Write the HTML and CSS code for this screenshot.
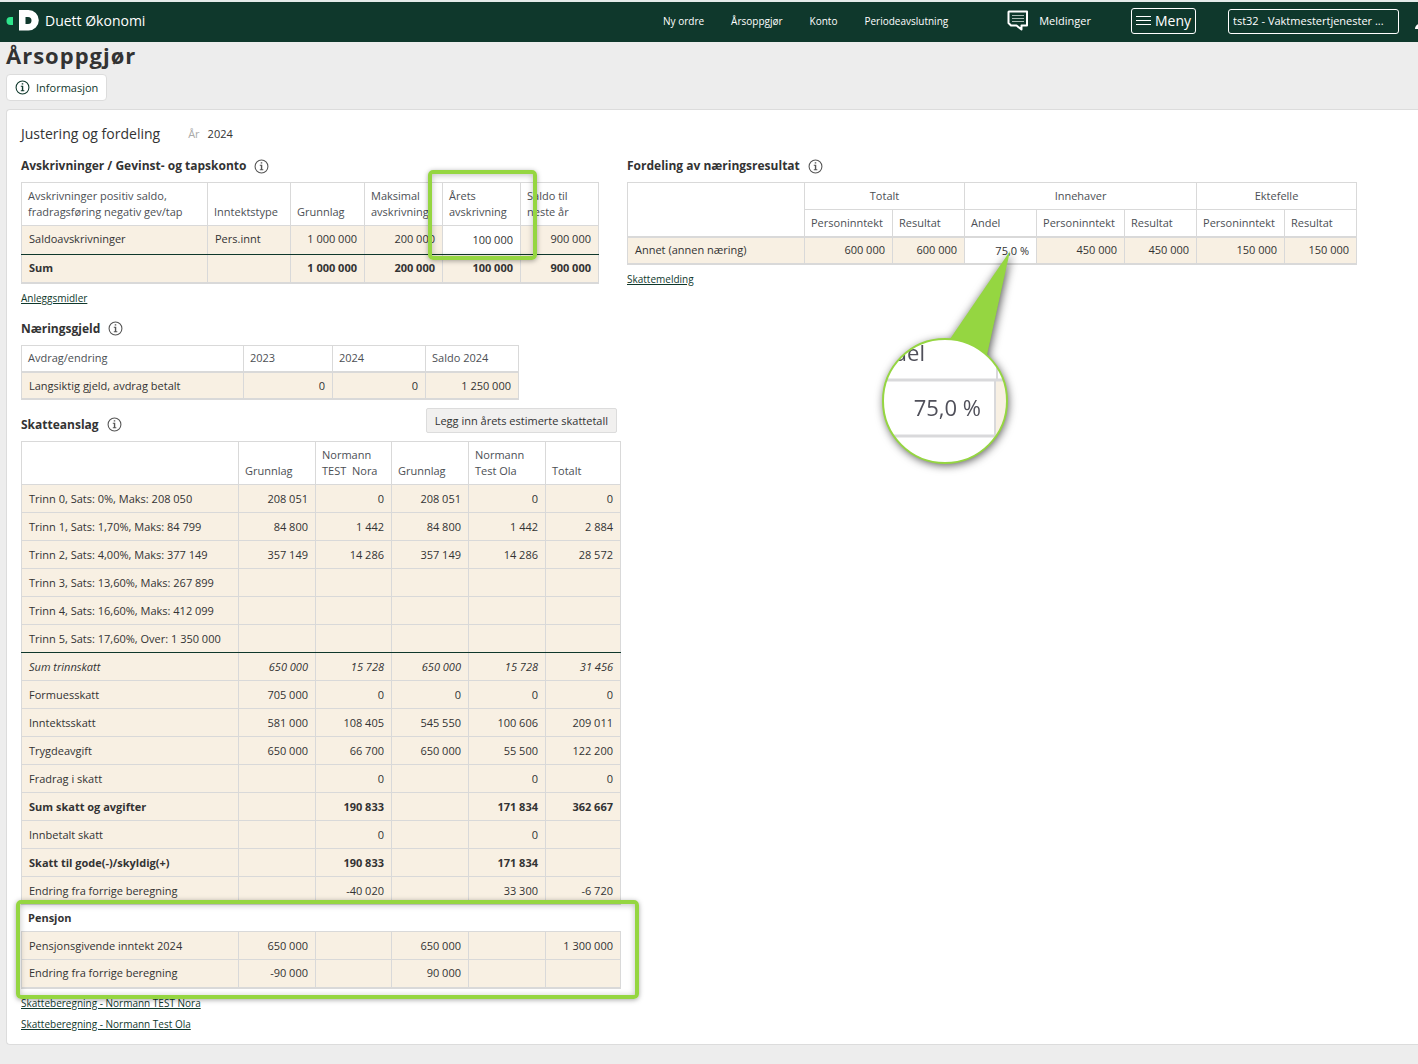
FILE: index.html
```html
<!DOCTYPE html>
<html lang="no">
<head>
    <meta charset="UTF-8">
    <meta name="viewport" content="width=device-width, initial-scale=1.0">
    <title>Duett Økonomi - Årsoppgjør</title>
    <link rel="stylesheet" href="styles.css">
</head>
<body>
    <svg class="sprite" aria-hidden="true">
        <symbol id="info" viewBox="0 0 14 14">
            <circle cx="7" cy="7" r="6" fill="none" stroke="currentColor" stroke-width="1"/>
            <path d="M6.3 3h1.4v1.3H6.3zM5.4 5.4h2.3v4.2h1v.8H5.4v-.8h1V6.2h-1z" fill="currentColor"/>
        </symbol>
    </svg>

    <header class="topbar">
        <a class="brand" href="#">
            <svg width="34" height="22" viewBox="0 0 34 22" aria-hidden="true">
                <path d="M8 7v8H5.500a4 4 0 0 1 0-8z" fill="#2ee58c"/>
                <path fill-rule="evenodd" d="M14 0h9.500a10.300 10.300 0 0 1 0 20.600H14zM20.500 7v7h2.500a3.500 3.500 0 0 0 0-7z" fill="#fff"/>
            </svg>
            <span>Duett Økonomi</span>
        </a>
        <nav class="nav">
            <a href="#">Ny ordre</a>
            <a href="#">Årsoppgjør</a>
            <a href="#">Konto</a>
            <a href="#">Periodeavslutning</a>
        </nav>
        <a class="messages" href="#">
            <svg width="22" height="22" viewBox="0 0 22 22" aria-hidden="true">
                <path d="M2 1.500h18v14h-5.500v4l-5-4H4L1.500 13V2z" fill="none" stroke="#fff" stroke-width="2" stroke-linejoin="round"/>
                <path d="M5 5.500h12M5 8.500h12M5 11.500h12" stroke="#a9b9b3" stroke-width="1"/>
            </svg>
            <span>Meldinger</span>
        </a>
        <button type="button" class="menu-btn">
            <svg width="15" height="12" viewBox="0 0 15 12" aria-hidden="true">
                <path d="M0 1.500h15M0 5.500h15M0 9.500h15" stroke="#fff" stroke-width="1"/>
            </svg>
            Meny
        </button>
        <select class="client" aria-label="Klient">
            <option>tst32 - Vaktmestertjenester ...</option>
        </select>
        <svg class="user" width="20" height="20" viewBox="0 0 20 20" aria-hidden="true">
            <circle cx="10" cy="6" r="5" fill="#fff"/>
            <path d="M0 18c0-4 4-6 10-6s10 2 10 6z" fill="#fff"/>
        </svg>
    </header>

    <main>
        <h1>Årsoppgjør</h1>
        <button type="button" class="info-btn">
            <svg class="icon"><use href="#info"/></svg>
            Informasjon
        </button>

        <section class="card">
            <div class="card-head">
                <h2>Justering og fordeling</h2>
                <span class="year-label">År</span>
                <span>2024</span>
            </div>

            <div class="columns">
                <div class="left">
                    <div class="section-head">
                        <h3>Avskrivninger / Gevinst- og tapskonto</h3>
                        <svg class="icon"><use href="#info"/></svg>
                    </div>
                    <div class="table-wrap">
                        <table class="depreciation">
                            <colgroup>
                                <col class="w-186"><col class="w-83"><col class="w-74"><col class="w-78"><col class="w-78"><col class="w-78">
                            </colgroup>
                            <thead>
                                <tr class="tall">
                                    <th>Avskrivninger positiv saldo, fradragsføring negativ gev/tap</th>
                                    <th>Inntektstype</th>
                                    <th>Grunnlag</th>
                                    <th>Maksimal avskrivning</th>
                                    <th>Årets avskrivning</th>
                                    <th>Saldo til neste år</th>
                                </tr>
                            </thead>
                            <tbody>
                                <tr class="line">
                                    <td>Saldoavskrivninger</td>
                                    <td class="text">Pers.innt</td>
                                    <td>1 000 000</td>
                                    <td>200 000</td>
                                    <td class="edit"><input type="text" value="100 000" aria-label="Årets avskrivning"></td>
                                    <td>900 000</td>
                                </tr>
                                <tr class="bold">
                                    <td>Sum</td>
                                    <td></td>
                                    <td>1 000 000</td>
                                    <td>200 000</td>
                                    <td>100 000</td>
                                    <td>900 000</td>
                                </tr>
                            </tbody>
                        </table>
                        <div class="marker marker-year"></div>
                    </div>
                    <div class="links">
                        <a href="#">Anleggsmidler</a>
                    </div>

                    <div class="section-head">
                        <h3>Næringsgjeld</h3>
                        <svg class="icon"><use href="#info"/></svg>
                    </div>
                    <table class="thick-head">
                        <colgroup>
                            <col class="w-222"><col class="w-89"><col class="w-93"><col class="w-93">
                        </colgroup>
                        <thead>
                            <tr>
                                <th>Avdrag/endring</th>
                                <th>2023</th>
                                <th>2024</th>
                                <th>Saldo 2024</th>
                            </tr>
                        </thead>
                        <tbody>
                            <tr>
                                <td>Langsiktig gjeld, avdrag betalt</td>
                                <td>0</td>
                                <td>0</td>
                                <td>1 250 000</td>
                            </tr>
                        </tbody>
                    </table>

                    <div class="section-head with-button">
                        <h3>Skatteanslag</h3>
                        <svg class="icon"><use href="#info"/></svg>
                        <button type="button" class="estimate-btn">Legg inn årets estimerte skattetall</button>
                    </div>
                    <div class="table-wrap">
                        <table class="tax">
                            <colgroup>
                                <col class="w-217"><col class="w-77"><col class="w-76"><col class="w-77"><col class="w-77"><col class="w-75">
                            </colgroup>
                            <thead>
                                <tr class="tall">
                                    <th></th>
                                    <th>Grunnlag</th>
                                    <th>Normann<br>TEST&nbsp; Nora</th>
                                    <th>Grunnlag</th>
                                    <th>Normann<br>Test Ola</th>
                                    <th>Totalt</th>
                                </tr>
                            </thead>
                            <tbody>
                                <tr><td>Trinn 0, Sats: 0%, Maks: 208 050</td><td>208 051</td><td>0</td><td>208 051</td><td>0</td><td>0</td></tr>
                                <tr><td>Trinn 1, Sats: 1,70%, Maks: 84 799</td><td>84 800</td><td>1 442</td><td>84 800</td><td>1 442</td><td>2 884</td></tr>
                                <tr><td>Trinn 2, Sats: 4,00%, Maks: 377 149</td><td>357 149</td><td>14 286</td><td>357 149</td><td>14 286</td><td>28 572</td></tr>
                                <tr><td>Trinn 3, Sats: 13,60%, Maks: 267 899</td><td></td><td></td><td></td><td></td><td></td></tr>
                                <tr><td>Trinn 4, Sats: 16,60%, Maks: 412 099</td><td></td><td></td><td></td><td></td><td></td></tr>
                                <tr class="line"><td>Trinn 5, Sats: 17,60%, Over: 1 350 000</td><td></td><td></td><td></td><td></td><td></td></tr>
                                <tr class="italic"><td>Sum trinnskatt</td><td>650 000</td><td>15 728</td><td>650 000</td><td>15 728</td><td>31 456</td></tr>
                                <tr><td>Formuesskatt</td><td>705 000</td><td>0</td><td>0</td><td>0</td><td>0</td></tr>
                                <tr><td>Inntektsskatt</td><td>581 000</td><td>108 405</td><td>545 550</td><td>100 606</td><td>209 011</td></tr>
                                <tr><td>Trygdeavgift</td><td>650 000</td><td>66 700</td><td>650 000</td><td>55 500</td><td>122 200</td></tr>
                                <tr><td>Fradrag i skatt</td><td></td><td>0</td><td></td><td>0</td><td>0</td></tr>
                                <tr class="bold"><td>Sum skatt og avgifter</td><td></td><td>190 833</td><td></td><td>171 834</td><td>362 667</td></tr>
                                <tr><td>Innbetalt skatt</td><td></td><td>0</td><td></td><td>0</td><td></td></tr>
                                <tr class="bold"><td>Skatt til gode(-)/skyldig(+)</td><td></td><td>190 833</td><td></td><td>171 834</td><td></td></tr>
                                <tr><td>Endring fra forrige beregning</td><td></td><td>-40 020</td><td></td><td>33 300</td><td>-6 720</td></tr>
                                <tr class="group"><th colspan="6">Pensjon</th></tr>
                                <tr><td>Pensjonsgivende inntekt 2024</td><td>650 000</td><td></td><td>650 000</td><td></td><td>1 300 000</td></tr>
                                <tr><td>Endring fra forrige beregning</td><td>-90 000</td><td></td><td>90 000</td><td></td><td></td></tr>
                            </tbody>
                        </table>
                        <div class="marker marker-pension"></div>
                    </div>
                    <div class="links">
                        <a href="#">Skatteberegning - Normann TEST Nora</a>
                        <a href="#">Skatteberegning - Normann Test Ola</a>
                    </div>
                </div>

                <div class="right">
                    <div class="section-head">
                        <h3>Fordeling av næringsresultat</h3>
                        <svg class="icon"><use href="#info"/></svg>
                    </div>
                    <div class="table-wrap">
                        <table class="thick-head">
                            <colgroup>
                                <col class="w-177"><col class="w-88"><col class="w-72"><col class="w-72"><col class="w-88"><col class="w-72"><col class="w-88"><col class="w-72">
                            </colgroup>
                            <thead>
                                <tr class="groups">
                                    <th rowspan="2"></th>
                                    <th colspan="2">Totalt</th>
                                    <th colspan="3">Innehaver</th>
                                    <th colspan="2">Ektefelle</th>
                                </tr>
                                <tr>
                                    <th>Personinntekt</th>
                                    <th>Resultat</th>
                                    <th>Andel</th>
                                    <th>Personinntekt</th>
                                    <th>Resultat</th>
                                    <th>Personinntekt</th>
                                    <th>Resultat</th>
                                </tr>
                            </thead>
                            <tbody>
                                <tr>
                                    <td>Annet (annen næring)</td>
                                    <td>600 000</td>
                                    <td>600 000</td>
                                    <td class="edit"><input type="text" value="75,0 %" aria-label="Andel"></td>
                                    <td>450 000</td>
                                    <td>450 000</td>
                                    <td>150 000</td>
                                    <td>150 000</td>
                                </tr>
                            </tbody>
                        </table>
                        <!-- magnifier over the Andel cell -->
                        <svg class="magnifier" width="160" height="240" viewBox="0 0 160 240">
                            <defs>
                                <clipPath id="lens"><circle cx="75" cy="161" r="62"/></clipPath>
                            </defs>
                            <g class="callout">
                                <path d="M140 11L80 99L117 115z" fill="#95d641"/>
                                <circle cx="75" cy="161" r="62" fill="#fff"/>
                            </g>
                            <g clip-path="url(#lens)">
                                <g class="lens">
                                    <path d="M125 141h15v54h-15z" fill="#f8f0e3"/>
                                    <path d="M0 140h150M0 196h150" stroke="#d9d9db" stroke-width="3"/>
                                    <path d="M127 90v50M125 141v55" stroke="#d9d9db" stroke-width="2"/>
                                    <text x="55" y="121" text-anchor="end">Andel</text>
                                    <text x="111" y="176" text-anchor="end">75,0 %</text>
                                </g>
                            </g>
                            <circle cx="75" cy="161" r="62" fill="none" stroke="#95d641" stroke-width="2"/>
                        </svg>
                    </div>
                    <div class="links">
                        <a href="#">Skattemelding</a>
                    </div>
                </div>
            </div>
        </section>
    </main>
</body>
</html>
```
FILE: styles.css
```css
* {
    box-sizing: border-box;
}

body {
    margin: 0;
    font-family: "Open Sans", Arial, sans-serif;
    font-size: 11px;
    line-height: 16px;
    color: #333;
    background-color: #ededed;
    overflow-x: hidden;
}

button,
input,
select {
    font: inherit;
    color: inherit;
}

h1, h2, h3 {
    margin: 0;
}

.sprite {
    position: absolute;
    width: 0;
    height: 0;
}

.icon {
    width: 15px;
    height: 15px;
    flex: none;
    color: #555;
}

/* Top bar */
.topbar {
    display: flex;
    align-items: center;
    height: 42px;
    padding: 0 0 2px 5px;
    border-top: 2px solid #e4ebe9;
    background-color: #0f382c;
    color: #fff;
    overflow: hidden;
}

.topbar a {
    color: #fff;
    text-decoration: none;
}

.brand {
    display: flex;
    align-items: center;
    gap: 6px;
    margin-right: auto;
    font-size: 14px;
}

.nav {
    display: flex;
    gap: 27px;
    margin-right: 59px;
    font-size: 10px;
}

.messages {
    display: flex;
    align-items: center;
    gap: 10px;
    margin-right: 40px;
}

.menu-btn {
    display: flex;
    align-items: center;
    gap: 4px;
    height: 26px;
    padding: 0 4px;
    margin-right: 32px;
    border: 1px solid #fff;
    border-radius: 3px;
    background: none;
    font-size: 14px;
}

.client {
    appearance: none;
    width: 171px;
    height: 25px;
    padding: 0 4px;
    border: 1px solid #fff;
    border-radius: 3px;
    background: none;
}

.user {
    flex: none;
    margin: 0 -17px 0 16px;
}

/* Page */
main {
    padding: 1px 0 18px 6px;
}

h1 {
    font-size: 22px;
    line-height: 24px;
    letter-spacing: 1px;
}

.info-btn {
    display: flex;
    align-items: center;
    gap: 6px;
    height: 27px;
    margin: 7px 0 8px;
    padding: 0 8px;
    border: 1px solid #dcdcdc;
    border-radius: 4px;
    background-color: #fff;
    color: #0f382c;
}

.info-btn .icon {
    color: #0f382c;
}

.card {
    padding: 14px 14px 12px;
    border: 1px solid #dcdcdc;
    border-right: none;
    border-radius: 4px 0 0 4px;
    background-color: #fff;
}

.card-head {
    display: flex;
    align-items: center;
    height: 20px;
    margin-bottom: 10px;
}

.card-head h2 {
    font-size: 14px;
    font-weight: normal;
}

.year-label {
    margin: 0 8px 0 28px;
    color: #aaa;
}

.columns {
    display: flex;
    gap: 6px;
}

.left {
    flex: none;
}

.right {
    flex: 1;
}

.section-head {
    display: flex;
    align-items: center;
    gap: 8px;
    min-height: 24px;
    margin-bottom: 4px;
}

.section-head h3 {
    font-size: 12px;
    line-height: 24px;
}

.links + .section-head {
    margin-top: 11px;
}

.with-button {
    align-items: flex-end;
    height: 29px;
    margin-top: 8px;
}

.with-button .icon {
    margin-bottom: 5px;
}

.estimate-btn {
    align-self: flex-start;
    height: 25px;
    margin: 0 4px 0 auto;
    padding: 0 8px;
    border: 1px solid #dcdcdc;
    border-radius: 2px;
    background-color: #f1f0ef;
}

/* Tables */
.table-wrap {
    position: relative;
    width: max-content;
}

table {
    table-layout: fixed;
    width: 1px;
    border-collapse: collapse;
    border-bottom: 2px solid #d9d9d9;
}

.w-72 { width: 72px; }
.w-74 { width: 74px; }
.w-75 { width: 75px; }
.w-76 { width: 76px; }
.w-77 { width: 77px; }
.w-78 { width: 78px; }
.w-83 { width: 83px; }
.w-88 { width: 88px; }
.w-89 { width: 89px; }
.w-93 { width: 93px; }
.w-177 { width: 177px; }
.w-186 { width: 186px; }
.w-217 { width: 217px; }
.w-222 { width: 222px; }

th,
td {
    height: 28px;
    padding: 0 7px;
    border: 1px solid #d9d9d9;
}

th {
    height: 27px;
    padding: 0 6px;
    font-weight: normal;
    text-align: left;
    color: #4c4f54;
}

.tall th {
    height: 43px;
    padding-bottom: 5px;
    vertical-align: bottom;
}

.groups th {
    text-align: center;
}

td {
    background-color: #f8f0e3;
    text-align: right;
    white-space: nowrap;
}

td:first-child,
td.text {
    text-align: left;
}

.thick-head td {
    height: 27px;
    border-top: 2px solid #d9d9d9;
}

tbody tr:last-child td {
    border-bottom: 2px solid #d9d9d9;
}

.line td {
    border-bottom: 1px solid #0f382c;
}

.depreciation .line td {
    height: 29px;
    padding-bottom: 2px;
}

.bold {
    font-weight: bold;
}

.italic {
    font-style: italic;
}

.group th {
    height: 27px;
    border-left-color: transparent;
    border-right-color: transparent;
    font-weight: bold;
    color: #333;
}

td.edit {
    padding: 0;
    background-color: #fff;
}

.edit input {
    display: block;
    width: 100%;
    height: 24px;
    padding: 0 7px;
    border: none;
    background: none;
    text-align: right;
}

.links {
    display: flex;
    flex-direction: column;
    align-items: flex-start;
    gap: 5px;
    margin-top: 6px;
    font-size: 10px;
}

.links a {
    color: #0f382c;
}

/* Highlights */
.marker {
    position: absolute;
    border: 4px solid #95d641;
    border-radius: 5px;
    box-shadow: 0 1px 5px rgba(0, 0, 0, 0.35), inset 0 1px 6px rgba(0, 0, 0, 0.25);
    pointer-events: none;
}

.marker-year {
    top: -12px;
    left: 407px;
    width: 109px;
    height: 90px;
}

.marker-pension {
    left: -5px;
    right: -18px;
    bottom: -10px;
    height: 99px;
}

.magnifier {
    position: absolute;
    top: 58px;
    left: 243px;
    overflow: visible;
    pointer-events: none;
}

.callout {
    filter: drop-shadow(1px 2px 5px rgba(0, 0, 0, 0.7));
}

.lens {
    font-size: 22px;
    fill: #50505a;
    filter: blur(0.6px);
}
```
